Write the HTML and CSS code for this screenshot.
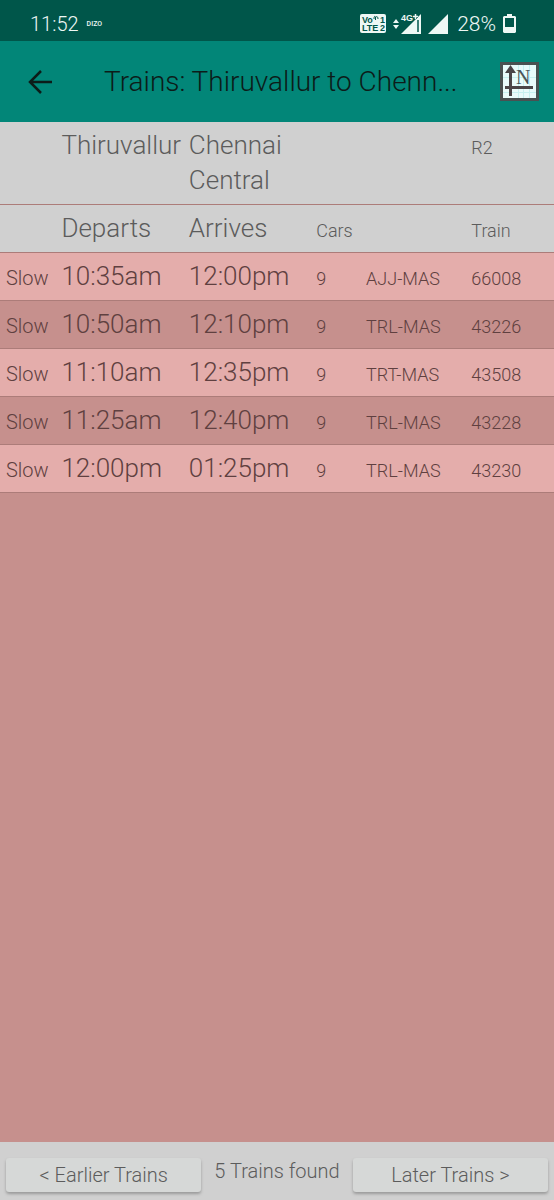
FILE: index.html
```html
<!DOCTYPE html>
<html lang="en">
<head>
<meta charset="utf-8">
<meta name="viewport" content="width=device-width, initial-scale=1">
<title>Trains: Thiruvallur to Chennai Central</title>
<link rel="stylesheet" href="styles.css">
</head>
<body>
<div class="status">
  <span class="clock">11:52</span>
  <span class="brand">DIZO</span>
  <div class="status-icons">
    <svg class="volte" width="26" height="19" viewBox="0 0 26 19" role="img" aria-label="VoLTE">
      <rect width="26" height="19" rx="2" fill="#eef8f5"/>
      <g fill="#00564a" font-family="Liberation Sans, Arial, sans-serif" font-weight="700" font-size="9">
        <text x="2" y="9">Vo</text><text x="2" y="17">LTE</text><text x="20" y="9">1</text><text x="20" y="17">2</text>
      </g>
      <path d="M14 5c0-3 1-3 1.500-2V6M16 3c1-1 2 0 2 2" fill="none" stroke="#00564a"/>
    </svg>
    <svg class="signal-data" width="28" height="20" viewBox="0 0 28 20" role="img" aria-label="4G+ signal">
      <path d="M0 9l3-4 3 4zM0 11l3 4 3-4z" fill="#eef8f5"/>
      <path d="M8 20L28 0V20z" fill="#eef8f5"/>
      <path d="M25 6V18" stroke="#00564a" stroke-width="1.500"/>
      <text x="8" y="7" fill="#eef8f5" stroke="#00564a" stroke-width="2" paint-order="stroke" font-family="Liberation Sans, Arial, sans-serif" font-weight="700" font-size="9">4G</text>
      <path d="M20 2.500h5M22.500 0v5" stroke="#00564a" stroke-width="3"/>
      <path d="M20 2.500h5M22.500 0v5" stroke="#eef8f5" stroke-width="1.500"/>
    </svg>
    <svg class="signal" width="20" height="20" viewBox="0 0 20 20" role="img" aria-label="Signal"><path d="M0 20L20 0V20z" fill="#eef8f5"/></svg>
    <span class="percent">28%</span>
    <svg class="battery" width="13" height="19" viewBox="0 0 13 19" role="img" aria-label="Battery"><path d="M4 0h5v2h3l1 1v15l-1 1H1l-1-1V3l1-1h3z" fill="#eef8f5"/><path d="M2 4h9v9H2z" fill="#00564a"/></svg>
  </div>
</div>
<header class="bar">
  <button class="back" type="button" aria-label="Back">
    <svg width="24" height="24" viewBox="0 0 24 24" fill="none" stroke="#0c1c19" stroke-width="2.500"><path d="M24 12H2M13 1L2 12l11 11"/></svg>
  </button>
  <h1 class="title">Trains: Thiruvallur to Chenn...</h1>
  <button class="north" type="button" aria-label="Map">
    <svg width="39" height="39" viewBox="0 0 39 39">
      <rect x="1.500" y="1.500" width="36" height="36" fill="#e9fbfb" stroke="#4a5152" stroke-width="3"/>
      <path d="M18.500 3V36M23.500 3V36M29.500 3V36M3 15.500H36M3 30.500H36" stroke="#c8f1f1"/>
      <path d="M10.500 34V9M5 25.500H33" stroke="#4b4548" stroke-width="3"/>
      <path d="M10.500 3L16 11H5z" fill="#4b4548"/>
      <text x="16" y="22" fill="#4b5558" font-family="Liberation Serif, Times New Roman, serif" font-size="20">N</text>
    </svg>
  </button>
</header>
<main class="content">
  <table class="trains">
    <colgroup><col class="c-type"><col class="c-time"><col class="c-time"><col class="c-cars"><col class="c-route"><col class="c-train"></colgroup>
    <thead>
      <tr><th></th><th class="big">Thiruvallur</th><th class="big">Chennai Central</th><th></th><th></th><th>R2</th></tr>
      <tr><th></th><th class="big">Departs</th><th class="big">Arrives</th><th>Cars</th><th></th><th>Train</th></tr>
    </thead>
    <tbody>
      <tr><td class="type">Slow</td><td class="big">10:35am</td><td class="big">12:00pm</td><td>9</td><td>AJJ-MAS</td><td>66008</td></tr>
      <tr><td class="type">Slow</td><td class="big">10:50am</td><td class="big">12:10pm</td><td>9</td><td>TRL-MAS</td><td>43226</td></tr>
      <tr><td class="type">Slow</td><td class="big">11:10am</td><td class="big">12:35pm</td><td>9</td><td>TRT-MAS</td><td>43508</td></tr>
      <tr><td class="type">Slow</td><td class="big">11:25am</td><td class="big">12:40pm</td><td>9</td><td>TRL-MAS</td><td>43228</td></tr>
      <tr><td class="type">Slow</td><td class="big">12:00pm</td><td class="big">01:25pm</td><td>9</td><td>TRL-MAS</td><td>43230</td></tr>
    </tbody>
  </table>
</main>
<footer class="footer">
  <button class="page-btn" type="button">&lt; Earlier Trains</button>
  <span class="found">5 Trains found</span>
  <button class="page-btn" type="button">Later Trains &gt;</button>
</footer>
</body>
</html>
```
FILE: styles.css
```css
* { box-sizing: border-box; }
body {
  margin: 0;
  min-height: 100vh;
  display: flex;
  flex-direction: column;
  background: #c6908d;
  color: #5c5c5c;
  font-family: Roboto, "Helvetica Neue", sans-serif;
  font-weight: 300;
}
button { font: inherit; color: inherit; border: 0; padding: 0; background: none; }
svg { display: block; }
.status {
  display: flex;
  align-items: center;
  height: 41px;
  padding: 6px 38px 0 30px;
  background: #00564a;
  color: #eef8f5;
  font-size: 20px;
}
.brand { margin-left: 8px; font-size: 7px; font-weight: 500; }
.percent { margin-left: 2px; font-size: 21px; }
.status-icons { display: flex; align-items: center; gap: 7px; margin-left: auto; }
.bar {
  display: flex;
  align-items: center;
  height: 81px;
  padding: 0 15px 0 28px;
  background: #028678;
  color: #0c1c19;
}
.title {
  flex: 1;
  min-width: 0;
  margin: 0 12px 0 52px;
  overflow: hidden;
  white-space: nowrap;
  text-overflow: ellipsis;
  font-size: 28px;
  line-height: 36px;
  font-weight: 300;
}
.content { flex: 1; }
.trains { width: 100%; table-layout: fixed; border-collapse: separate; border-spacing: 0; }
.c-type { width: 10%; }
.c-time { width: 23%; }
.c-cars { width: 9%; }
.c-route { width: 19%; }
.c-train { width: 16%; }
.trains th, .trains td {
  padding: 6px 0 6px 6px;
  border-bottom: 1px solid #ac7c79;
  text-align: left;
  vertical-align: baseline;
  font-size: 18px;
  line-height: 24px;
  font-weight: 300;
}
.trains .big { font-size: 26px; line-height: 35px; }
.trains .type { font-size: 20px; }
.trains thead { background: #d0d0d0; }
.trains tbody { color: #5f4040; }
.trains tbody tr:nth-child(odd) { background: #e4adab; }
.footer {
  display: flex;
  gap: 13px;
  padding: 16px 6px 8px;
  background: #d0d0d0;
  font-size: 20px;
}
.page-btn {
  flex: 1;
  height: 34px;
  border-radius: 3px;
  background: #d6d8d7;
  box-shadow: 0 2px 3px #9a9a9a;
}
.found { line-height: 26px; }
```
